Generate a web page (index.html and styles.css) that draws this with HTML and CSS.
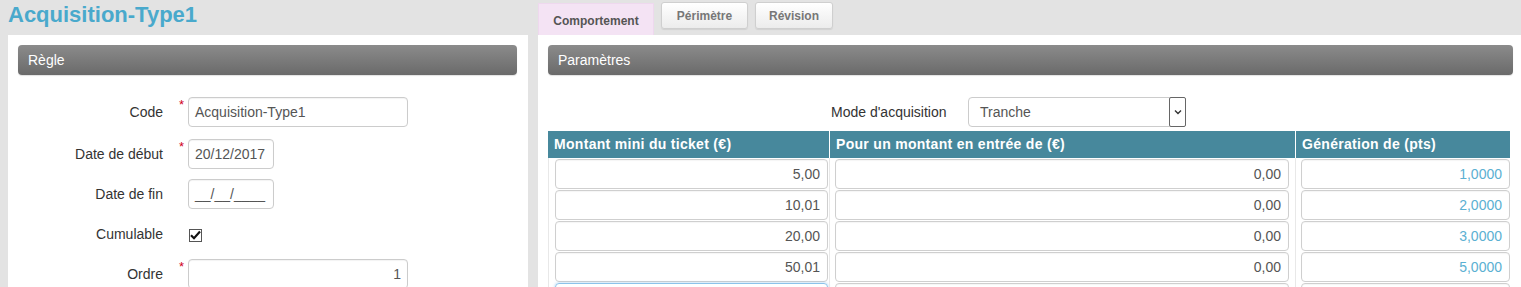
FILE: index.html
```html
<!DOCTYPE html>
<html lang="fr">
<head>
<meta charset="utf-8">
<title>Acquisition-Type1</title>
<link rel="stylesheet" href="styles.css">
</head>
<body>
<div class="page">
  <div class="col-left">
    <h1 class="title">Acquisition-Type1</h1>
    <div class="panel panel-left">
      <div class="bar">Règle</div>
      <div class="form">
        <div class="row row-first">
          <div class="lbl">Code</div><div class="req">*</div>
          <div class="field w-long">Acquisition-Type1</div>
        </div>
        <div class="row row-second">
          <div class="lbl">Date de début</div><div class="req">*</div>
          <div class="field w-date">20/12/2017</div>
        </div>
        <div class="row">
          <div class="lbl">Date de fin</div><div class="req"></div>
          <div class="field w-date">__/__/____</div>
        </div>
        <div class="row">
          <div class="lbl">Cumulable</div><div class="req"></div>
          <div class="check"><svg width="11" height="10" viewBox="0 0 11 10"><path d="M1 5.2 L4 8.2 L10 1.5" fill="none" stroke="#111" stroke-width="2.2"/></svg></div>
        </div>
        <div class="row">
          <div class="lbl">Ordre</div><div class="req">*</div>
          <div class="field w-long num">1</div>
        </div>
      </div>
    </div>
  </div>
  <div class="col-right">
    <div class="tabs">
      <div class="tab tab-active">Comportement</div>
      <div class="tab tab-btn tab-peri">Périmètre</div>
      <div class="tab tab-btn tab-rev">Révision</div>
    </div>
    <div class="panel panel-right">
      <div class="bar">Paramètres</div>
      <div class="mode-row">
        <div class="mode-lbl">Mode d'acquisition</div>
        <div class="select">
          <span class="select-text">Tranche</span>
          <span class="select-arrow"><svg width="8" height="6" viewBox="0 0 8 6"><path d="M1 1.5 L4 4.5 L7 1.5" fill="none" stroke="#333" stroke-width="1.4"/></svg></span>
        </div>
      </div>
      <div class="grid">
        <div class="th">Montant mini du ticket (€)</div>
        <div class="th th-sep">Pour un montant en entrée de (€)</div>
        <div class="th th-sep">Génération de (pts)</div>

        <div class="td c1"><div class="cell-in">5,00</div></div>
        <div class="td c2"><div class="cell-in">0,00</div></div>
        <div class="td c3"><div class="cell-in blue">1,0000</div></div>

        <div class="td c1"><div class="cell-in">10,01</div></div>
        <div class="td c2"><div class="cell-in">0,00</div></div>
        <div class="td c3"><div class="cell-in blue">2,0000</div></div>

        <div class="td c1"><div class="cell-in">20,00</div></div>
        <div class="td c2"><div class="cell-in">0,00</div></div>
        <div class="td c3"><div class="cell-in blue">3,0000</div></div>

        <div class="td c1"><div class="cell-in">50,01</div></div>
        <div class="td c2"><div class="cell-in">0,00</div></div>
        <div class="td c3"><div class="cell-in blue">5,0000</div></div>

        <div class="td c1"><div class="cell-in focus"></div></div>
        <div class="td c2"><div class="cell-in"></div></div>
        <div class="td c3"><div class="cell-in"></div></div>
      </div>
    </div>
  </div>
</div>
</body>
</html>
```

FILE: styles.css
```css
* { box-sizing: border-box; }
html, body { margin: 0; padding: 0; }
body {
  background: #e3e3e3;
  font-family: "Liberation Sans", Arial, sans-serif;
  font-size: 14px;
  color: #333;
  overflow: hidden;
  height: 287px;
}
.page {
  display: flex;
  padding-left: 8px;
  height: 287px;
}
.col-left {
  width: 520px;
  display: flex;
  flex-direction: column;
}
.col-right {
  flex: 1;
  margin-left: 10px;
  display: flex;
  flex-direction: column;
}
.title {
  margin: 0;
  height: 35px;
  flex-shrink: 0;
  line-height: 30px;
  font-size: 22px;
  font-weight: bold;
  color: #49a9cc;
}
.panel {
  background: #fff;
  flex: 1;
  min-height: 0;
  overflow: hidden;
  padding-top: 10px;
}
.panel-left { padding-left: 10px; padding-right: 11px; }
.panel-right { padding-left: 10px; padding-right: 8px; }
.bar {
  height: 30px;
  line-height: 30px;
  border-radius: 4px;
  background: linear-gradient(#8b8b8b, #6a6a6a);
  color: #fff;
  font-size: 14px;
  padding-left: 10px;
  box-shadow: 0 1px 1px rgba(0,0,0,0.12);
}
.form { padding-top: 22px; }
.row {
  display: flex;
  align-items: center;
  height: 30px;
  margin-top: 10px;
}
.row-first { margin-top: 0; }
.row-second { margin-top: 12px; }
.lbl {
  width: 145px;
  text-align: right;
  color: #333;
}
.req {
  width: 25px;
  align-self: flex-start;
  padding-left: 16px;
  color: #d0021b;
  font-size: 13px;
  line-height: 14px;
  padding-top: 1px;
}
.field {
  height: 30px;
  border: 1px solid #ccc;
  border-radius: 4px;
  padding: 0 6px;
  line-height: 28px;
  color: #555;
  box-shadow: inset 0 1px 1px rgba(0,0,0,0.05);
  white-space: nowrap;
  overflow: hidden;
}
.w-long { width: 220px; }
.w-date { width: 86px; }
.num { text-align: right; }
.check {
  width: 13px;
  height: 13px;
  border: 1px solid #555;
  margin-left: 1px;
  margin-top: 2px;
  display: flex;
  align-items: center;
  justify-content: center;
  background: #fff;
}
.tabs {
  height: 35px;
  flex-shrink: 0;
  display: flex;
  align-items: flex-start;
  padding-top: 3px;
}
.tab {
  font-size: 12px;
  font-weight: bold;
  display: flex;
  align-items: center;
  justify-content: center;
}
.tab-active {
  width: 116px;
  height: 32px;
  background: #f4e3f4;
  border: 1px solid #eed8ee;
  border-bottom: none;
  color: #555;
  padding-top: 2px;
}
.tab-btn {
  height: 27px;
  margin-left: 7px;
  background: linear-gradient(#ffffff, #ececec);
  border: 1px solid #cfcfcf;
  border-radius: 3px;
  color: #777;
  box-shadow: 0 1px 1px rgba(0,0,0,0.08);
  margin-top: -1px;
}
.tab-peri { width: 87px; }
.tab-rev { width: 78px; }
.mode-row {
  display: flex;
  align-items: center;
  height: 30px;
  margin-top: 22px;
}
.mode-lbl {
  margin-left: 283px;
  width: 137px;
  color: #333;
}
.select {
  width: 218px;
  height: 30px;
  border: 1px solid #ccc;
  border-radius: 4px;
  display: flex;
  align-items: center;
  justify-content: space-between;
  padding-left: 11px;
  color: #555;
}
.select-arrow {
  width: 17px;
  height: 30px;
  border: 1px solid #666;
  border-radius: 2px;
  margin-right: -1px;
  display: flex;
  align-items: center;
  justify-content: center;
  background: #fff;
}
.grid {
  margin-top: 4px;
  width: 962px;
  display: grid;
  grid-template-columns: 281px 466px 215px;
}
.th {
  height: 27px;
  line-height: 27px;
  background: #47889c;
  color: #fff;
  font-weight: bold;
  font-size: 14px;
  padding-left: 6px;
  letter-spacing: 0.3px;
  white-space: nowrap;
}
.th-sep { border-left: 1px solid #fff; }
.td {
  height: 31px;
  padding-top: 1px;
  border-left: 1px solid #e8e8e8;
}
.c1 { padding-left: 6px; padding-right: 1px; }
.c2 { padding-left: 5px; padding-right: 6px; }
.c3 { padding-left: 5px; padding-right: 0; }
.cell-in {
  height: 30px;
  border: 1px solid #cfcfcf;
  border-radius: 4px;
  text-align: right;
  padding-right: 7px;
  line-height: 28px;
  color: #555;
  box-shadow: inset 0 1px 1px rgba(0,0,0,0.04);
}
.cell-in.blue { color: #5bb0d2; }
.cell-in.focus {
  border-color: #8cc3ea;
  box-shadow: 0 0 3px rgba(102,175,233,0.6);
}
```
